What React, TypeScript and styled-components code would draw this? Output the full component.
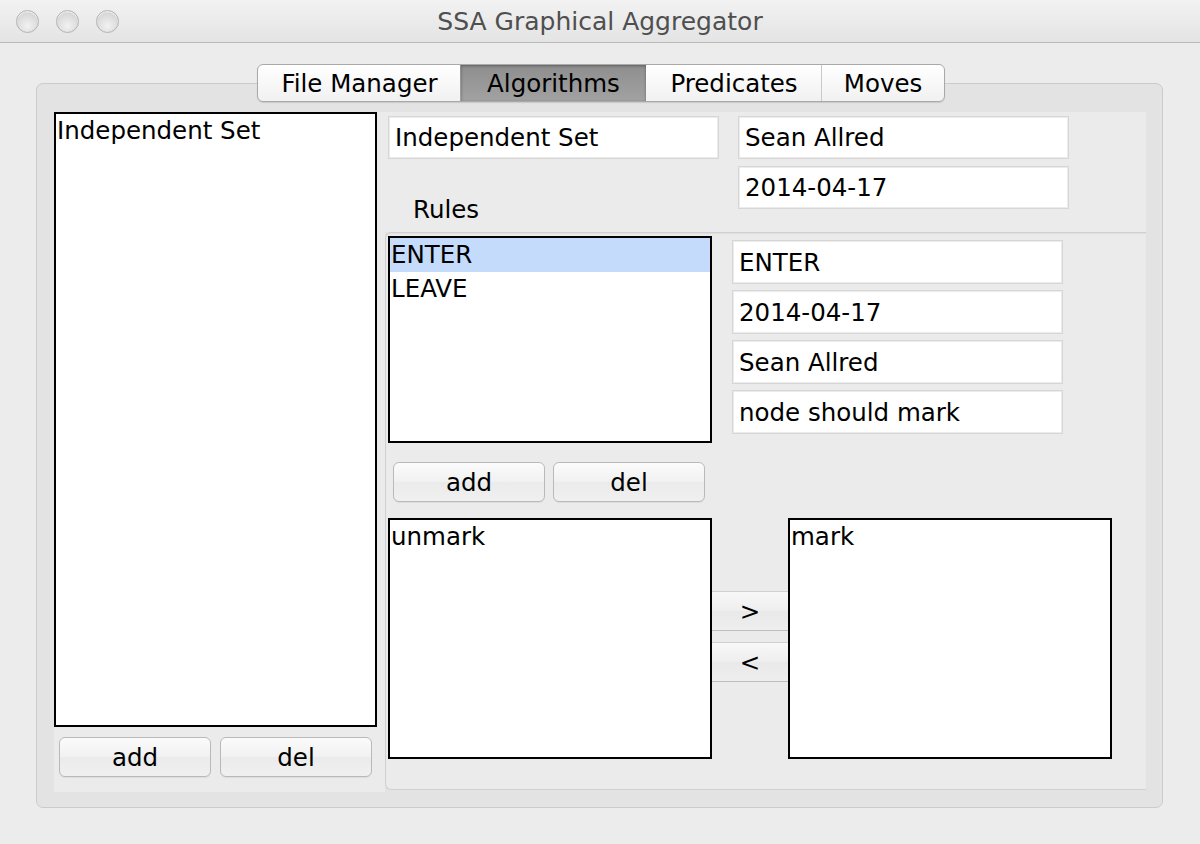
import React from "react";
import styled, { createGlobalStyle } from "styled-components";

const Global = createGlobalStyle`
  html, body { margin: 0; padding: 0; background: #ececec; }
  #root { width: 1200px; height: 844px; }
  * { box-sizing: border-box; }
`;

const Window = styled.div`
  width: 1200px;
  height: 844px;
  background: #ececec;
  font-family: "DejaVu Sans", "Liberation Sans", sans-serif;
  font-size: 24.5px;
  color: #000;
  display: flex;
  flex-direction: column;
  overflow: hidden;
`;

const TitleBar = styled.div`
  height: 43px;
  flex: none;
  display: flex;
  align-items: center;
  padding-left: 16px;
  background: linear-gradient(#f2f2f2, #e4e4e4);
  border-bottom: 1px solid #b9b9b9;
`;

const Lights = styled.div`
  display: flex;
  gap: 17px;
  width: 0;
`;

const Light = styled.span`
  flex: none;
  width: 23px;
  height: 23px;
  border-radius: 50%;
  border: 1px solid #b3b3b3;
  background: radial-gradient(circle at 50% 70%, #f2f2f2, #d6d6d6 70%);
  box-shadow: inset 0 1px 1px rgba(255, 255, 255, 0.8);
`;

const Title = styled.div`
  flex: 1;
  text-align: center;
  font-size: 25px;
  color: #4f4f4f;
  margin-right: 16px;
  padding-top: 1px;
`;

const Body = styled.div`
  flex: 1;
  display: flex;
  flex-direction: column;
  padding: 21px 37px 0 36px;
`;

const TabStrip = styled.div`
  position: relative;
  z-index: 1;
  align-self: center;
  display: flex;
  height: 38px;
  margin-bottom: -19px;
  margin-left: 3px;
  border: 1px solid #a9a9a9;
  border-radius: 6px;
  overflow: hidden;
  box-shadow: 0 1px 1px rgba(0, 0, 0, 0.12);
  background: linear-gradient(#ffffff, #f1f1f1);
`;

const Tab = styled.div<{ $active?: boolean; $divider?: boolean; $w: number }>`
  width: ${(p) => p.$w}px;
  display: flex;
  align-items: center;
  justify-content: center;
  border-left: 1px solid ${(p) => (p.$divider ? "#c9c9c9" : "transparent")};
  background: ${(p) =>
    p.$active ? "linear-gradient(#8e8e8e, #a2a2a2)" : "transparent"};
  box-shadow: ${(p) =>
    p.$active ? "inset 0 1px 3px rgba(0,0,0,0.35)" : "none"};
  color: #000;
`;

const Pane = styled.div`
  height: 725px;
  border: 1px solid #cbcbcb;
  border-radius: 7px;
  background: #e3e3e3;
  padding: 28px 16px 15px 17px;
  display: flex;
`;

const LeftPanel = styled.div`
  width: 331px;
  flex: none;
  background: #ebebeb;
  display: flex;
  flex-direction: column;
`;

const ListBox = styled.div<{ $w: number; $h: number }>`
  width: ${(p) => p.$w}px;
  height: ${(p) => p.$h}px;
  flex: none;
  background: #fff;
  border: 2px solid #000;
  display: flex;
  flex-direction: column;
`;

const ListItem = styled.div<{ $selected?: boolean }>`
  height: 34px;
  line-height: 34px;
  padding-left: 1px;
  white-space: nowrap;
  background: ${(p) => (p.$selected ? "#c4dbfb" : "transparent")};
`;

const ButtonRow = styled.div<{ $top: number; $left: number; $gap: number }>`
  display: flex;
  gap: ${(p) => p.$gap}px;
  margin-top: ${(p) => p.$top}px;
  padding-left: ${(p) => p.$left}px;
`;

const Button = styled.div`
  width: 152px;
  height: 40px;
  display: flex;
  align-items: center;
  justify-content: center;
  border: 1px solid #b9b9b9;
  border-radius: 6px;
  background: linear-gradient(#fbfbfb, #f1f1f1 50%, #ebebeb 51%, #f0f0f0);
  box-shadow: 0 1px 0 rgba(0, 0, 0, 0.06);
`;

const RightPanel = styled.div`
  flex: 1;
  display: flex;
  flex-direction: column;
`;

const HeaderArea = styled.div`
  height: 120px;
  flex: none;
  background: #ebebeb;
  display: grid;
  grid-template-columns: 331px 331px;
  grid-auto-rows: 43px;
  column-gap: 19px;
  row-gap: 7px;
  padding: 4px 0 0 3px;
`;

const Field = styled.div<{ $h?: number }>`
  width: 331px;
  height: ${(p) => p.$h ?? 43}px;
  background: #fff;
  border: 1px solid #d6d6d6;
  box-shadow: inset 0 0 0 1px #ececec;
  display: flex;
  align-items: center;
  padding-left: 6px;
  white-space: nowrap;
`;

const Label = styled.div`
  padding: 29px 0 0 25px;
  line-height: 30px;
`;

const Group = styled.div`
  height: 558px;
  flex: none;
  background: #ebebeb;
  border: 1px solid #d0d0d0;
  border-right: none;
  border-radius: 6px 0 0 6px;
  box-shadow: inset 0 1px 1px rgba(0, 0, 0, 0.05);
  padding: 3px 0 0 2px;
  display: flex;
  flex-direction: column;
`;

const RuleRow = styled.div`
  display: flex;
  gap: 20px;
`;

const FieldColumn = styled.div`
  display: flex;
  flex-direction: column;
  gap: 6px;
  padding-top: 4px;
`;

const TransferRow = styled.div`
  display: flex;
  margin-top: 16px;
`;

const TransferButtons = styled.div`
  width: 76px;
  flex: none;
  display: flex;
  flex-direction: column;
  justify-content: center;
  gap: 11px;
  padding-bottom: 4px;
`;

const ArrowButton = styled.div`
  height: 40px;
  display: flex;
  align-items: center;
  justify-content: center;
  border-top: 1px solid #d0d0d0;
  border-bottom: 1px solid #bdbdbd;
  background: linear-gradient(#f8f8f8, #eeeeee 50%, #e9e9e9 51%, #eeeeee);
`;

export default function App() {
  return (
    <Window>
      <Global />
      <TitleBar>
        <Lights>
          <Light />
          <Light />
          <Light />
        </Lights>
        <Title>SSA Graphical Aggregator</Title>
      </TitleBar>
      <Body>
        <TabStrip>
          <Tab $w={202}>File Manager</Tab>
          <Tab $w={186} $active>
            Algorithms
          </Tab>
          <Tab $w={175}>Predicates</Tab>
          <Tab $w={123} $divider>
            Moves
          </Tab>
        </TabStrip>
        <Pane>
          <LeftPanel>
            <ListBox $w={323} $h={615}>
              <ListItem>Independent Set</ListItem>
            </ListBox>
            <ButtonRow $top={10} $left={5} $gap={9}>
              <Button>add</Button>
              <Button>del</Button>
            </ButtonRow>
          </LeftPanel>
          <RightPanel>
            <HeaderArea>
              <Field>Independent Set</Field>
              <Field>Sean Allred</Field>
              <Label>Rules</Label>
              <Field>2014-04-17</Field>
            </HeaderArea>
            <Group>
              <RuleRow>
                <ListBox $w={324} $h={207}>
                  <ListItem $selected>ENTER</ListItem>
                  <ListItem>LEAVE</ListItem>
                </ListBox>
                <FieldColumn>
                  <Field $h={44}>ENTER</Field>
                  <Field $h={44}>2014-04-17</Field>
                  <Field $h={44}>Sean Allred</Field>
                  <Field $h={44}>node should mark</Field>
                </FieldColumn>
              </RuleRow>
              <ButtonRow $top={19} $left={5} $gap={8}>
                <Button>add</Button>
                <Button>del</Button>
              </ButtonRow>
              <TransferRow>
                <ListBox $w={324} $h={241}>
                  <ListItem>unmark</ListItem>
                </ListBox>
                <TransferButtons>
                  <ArrowButton>&gt;</ArrowButton>
                  <ArrowButton>&lt;</ArrowButton>
                </TransferButtons>
                <ListBox $w={324} $h={241}>
                  <ListItem>mark</ListItem>
                </ListBox>
              </TransferRow>
            </Group>
          </RightPanel>
        </Pane>
      </Body>
    </Window>
  );
}
